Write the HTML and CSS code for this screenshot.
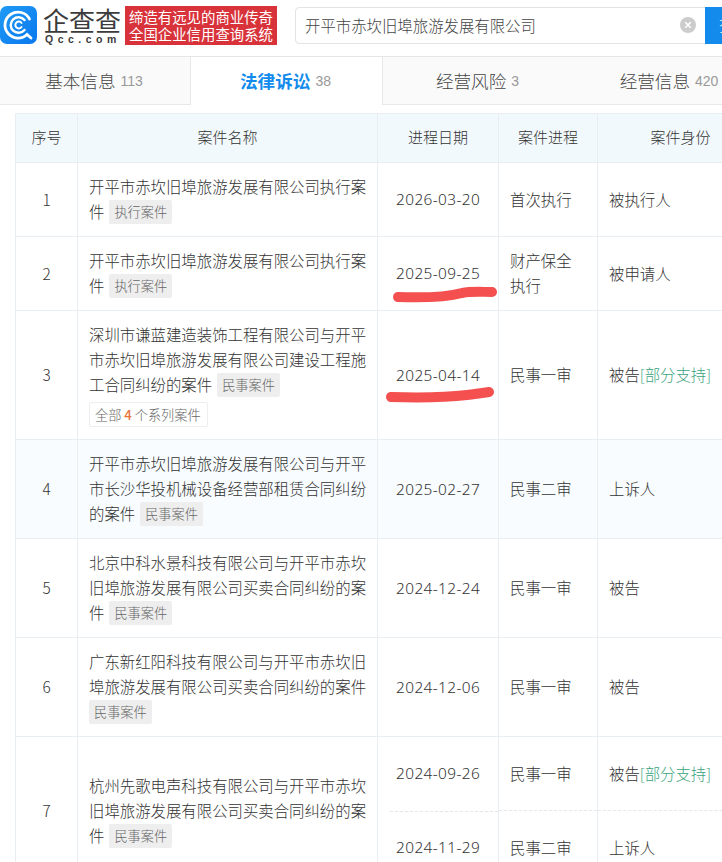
FILE: index.html
```html
<!DOCTYPE html>
<html lang="zh-CN">
<head>
<meta charset="utf-8">
<title>开平市赤坎旧埠旅游发展有限公司</title>
<link rel="stylesheet" href="styles.css">
</head>
<body>
<div class="page">
  <header class="topbar">
    <div class="logo">
      <svg class="logo-icon" width="37" height="38" viewBox="0 0 37 38">
        <defs><linearGradient id="lg" x1="0" y1="0" x2="1" y2="1"><stop offset="0" stop-color="#1f9bf5"/><stop offset="1" stop-color="#0a78ee"/></linearGradient></defs>
        <rect width="37" height="38" rx="7" fill="url(#lg)"/>
        <g fill="none" stroke="#fff" stroke-linecap="round">
          <path d="M29.5 13A13 13 0 1 0 27 28.5L31 32" stroke-width="2.8"/>
          <path d="M24.5 14A7.8 7.8 0 1 0 24.5 24" stroke-width="2.4"/>
          <path d="M21.5 17A3.4 3.4 0 1 0 21.5 21" stroke-width="2"/>
        </g>
      </svg>
      <div class="wordmark">
        <span class="wm-cn">企查查</span>
        <span class="wm-en">Qcc.com</span>
      </div>
      <div class="slogan"><span>缔造有远见的商业传奇</span><span>全国企业信用查询系统</span></div>
    </div>
    <div class="search">
      <span class="search-text">开平市赤坎旧埠旅游发展有限公司</span>
      <svg class="clear" width="16" height="16" viewBox="0 0 16 16"><circle cx="8" cy="8" r="8" fill="#ccc"/><path d="M5.3 5.3L10.7 10.7M10.7 5.3L5.3 10.7" stroke="#fff" stroke-width="1.6"/></svg>
      <span class="search-btn">查一下</span>
    </div>
  </header>
  <nav class="tabs">
    <div class="tab tab-first">基本信息 <small>113</small></div>
    <div class="tab active">法律诉讼 <small>38</small></div>
    <div class="tab tab-third">经营风险 <small>3</small></div>
    <div class="tab">经营信息 <small>420</small></div>
  </nav>
  <main class="content">
    <table class="cases">
      <colgroup><col class="c1"><col class="c2"><col class="c3"><col class="c4"><col class="c5"></colgroup>
      <thead><tr><th>序号</th><th>案件名称</th><th>进程日期</th><th>案件进程</th><th>案件身份</th></tr></thead>
      <tbody>
        <tr><td class="num">1</td><td class="name">开平市赤坎旧埠旅游发展有限公司执行案件<span class="tag">执行案件</span></td><td class="date">2026-03-20</td><td>首次执行</td><td>被执行人</td></tr>
        <tr><td class="num">2</td><td class="name">开平市赤坎旧埠旅游发展有限公司执行案件<span class="tag">执行案件</span></td><td class="date">2025-09-25</td><td>财产保全执行</td><td>被申请人</td></tr>
        <tr><td class="num">3</td><td class="name">深圳市谦蓝建造装饰工程有限公司与开平市赤坎旧埠旅游发展有限公司建设工程施工合同纠纷的案件<span class="tag">民事案件</span><div class="series">全部 <b>4</b> 个系列案件</div></td><td class="date">2025-04-14</td><td>民事一审</td><td>被告<span class="ok">[部分支持]</span></td></tr>
        <tr class="hl"><td class="num">4</td><td class="name">开平市赤坎旧埠旅游发展有限公司与开平市长沙华投机械设备经营部租赁合同纠纷的案件<span class="tag">民事案件</span></td><td class="date">2025-02-27</td><td>民事二审</td><td>上诉人</td></tr>
        <tr><td class="num">5</td><td class="name">北京中科水景科技有限公司与开平市赤坎旧埠旅游发展有限公司买卖合同纠纷的案件<span class="tag">民事案件</span></td><td class="date">2024-12-24</td><td>民事一审</td><td>被告</td></tr>
        <tr><td class="num">6</td><td class="name">广东新红阳科技有限公司与开平市赤坎旧埠旅游发展有限公司买卖合同纠纷的案件<span class="tag tag-line">民事案件</span></td><td class="date">2024-12-06</td><td>民事一审</td><td>被告</td></tr>
        <tr class="sub"><td class="num" rowspan="2">7</td><td class="name" rowspan="2">杭州先歌电声科技有限公司与开平市赤坎旧埠旅游发展有限公司买卖合同纠纷的案件<span class="tag">民事案件</span></td><td class="date">2024-09-26</td><td>民事一审</td><td>被告<span class="ok">[部分支持]</span></td></tr>
        <tr class="sub2"><td class="date">2024-11-29</td><td>民事二审</td><td>上诉人</td></tr>
      </tbody>
    </table>
  </main>
  <svg class="marks" width="722" height="862" viewBox="0 0 722 862">
    <path d="M398 297C425 298 447 297 462 293C472 291 482 292 492 292"/>
    <path d="M391 397C425 398 450 397 467 395C475 394 482 393 489 392"/>
  </svg>
</div>
</body>
</html>
```
FILE: styles.css
```css
* { box-sizing: border-box; }
html, body { margin: 0; padding: 0; }
body { background: #fff; color: #333; font-family: "Noto Sans CJK SC", "Liberation Sans", sans-serif; font-weight: 300; }
.page { position: relative; width: 722px; height: 862px; overflow: hidden; }

.topbar { display: flex; align-items: center; height: 57px; padding-bottom: 6px; border-bottom: 1px solid #e6e6e6; }
.logo { display: flex; align-items: center; width: 295px; flex: none; }
.logo-icon { flex: none; }
.wordmark { display: flex; flex-direction: column; width: 78px; margin-left: 6px; margin-right: 4px; color: #3c3c3c; }
.wm-cn { font-size: 26px; line-height: 28px; font-weight: 400; white-space: nowrap; }
.wm-en { padding-left: 2px; font-family: "Liberation Sans", sans-serif; font-size: 10.5px; line-height: 10px; letter-spacing: 4.5px; font-weight: 700; white-space: nowrap; }
.slogan { display: flex; flex-direction: column; justify-content: center; width: 152px; height: 39px; background: #d8333a; color: #fff; font-size: 14.4px; line-height: 17px; text-align: center; font-weight: 400; white-space: nowrap; }

.search { display: flex; align-items: center; flex: none; width: 461px; height: 37px; padding-left: 9px; border: 1px solid #e3e3e3; border-radius: 4px 0 0 4px; font-size: 15.4px; color: #444; white-space: nowrap; }
.search-text { flex: 1; }
.clear { flex: none; margin-right: 9px; }
.search-btn { flex: none; width: 50px; height: 37px; margin: -1px 0; padding-left: 14px; background: #128bed; color: #fff; line-height: 37px; }

.tabs { display: flex; height: 48px; }
.tab { flex: none; width: 192px; display: flex; align-items: center; justify-content: center; gap: 5px; padding-right: 2px; background: #fafafa; border-bottom: 1px solid #e8e8e8; font-size: 17.6px; color: #444; white-space: nowrap; }
.tab-first { width: 191px; border-right: 1px solid #e8e8e8; }
.tab-third { border-left: 1px solid #e8e8e8; }
.tab small { font-size: 14px; color: #999; font-family: "Liberation Sans", sans-serif; font-weight: 400; }
.tab.active { width: 191px; background: #fff; border-bottom-color: #fff; color: #128bed; font-weight: 700; }

.content { padding: 8px 0 0 15px; }
.cases { table-layout: fixed; width: 748px; border-collapse: collapse; font-size: 15.4px; line-height: 25px; color: #333; }
.c1 { width: 62px; } .c2 { width: 300px; } .c3 { width: 121px; } .c4 { width: 99px; } .c5 { width: 166px; }
.cases th { height: 49px; padding: 0 4px 4px; background: #f2f9fc; border: 1px solid #e8eef1; font-weight: 300; font-size: 15px; text-align: center; }
.cases td { padding: 11px 11px 12px; border: 1px solid #e8eef1; vertical-align: middle; }
.cases td.num { text-align: center; }
.cases td.name { padding-right: 8px; }
.cases td.date { position: relative; padding-top: 12px; padding-left: 18px; letter-spacing: 0.4px; font-family: "Noto Sans", sans-serif; font-weight: 300; font-size: 15.4px; }
.hl td { background: #f8fcfe; }
.tag { display: inline-block; height: 24px; margin-left: 5px; margin-top: 1px; padding: 0 5px; border-radius: 2px; background: #eee; color: #666; font-size: 13.2px; line-height: 24px; vertical-align: top; }
.tag-line { margin-left: 0; }
.series { width: 119px; height: 25px; margin-top: 5px; padding: 0 5px; border: 1px solid #eee; border-radius: 2px; font-size: 13.2px; line-height: 23px; color: #666; white-space: nowrap; }
.series b { color: #e8743b; font-weight: 500; }
.ok { color: #3aa37e; }
.sub td, .sub2 td { height: 74px; }
.sub td:not([rowspan]) { border-bottom: 1px dashed #e3e8ec; }
.sub2 td { border-top: 1px dashed #e3e8ec; }
.sub td.date { border-bottom: 0; }
.sub2 td.date { border-top: 0; }
.sub td.date::after { content: ""; position: absolute; left: 12px; right: 0; bottom: -1px; border-top: 1px dashed #e3e8ec; }
.marks { position: absolute; left: 0; top: 0; fill: none; stroke: #f4504f; stroke-width: 10; stroke-linecap: round; pointer-events: none; }
```
